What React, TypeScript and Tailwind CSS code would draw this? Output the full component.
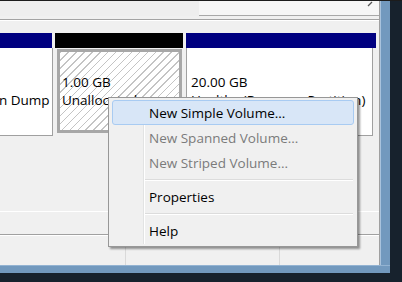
const hatch =
  "bg-[repeating-linear-gradient(135deg,#c4c4c4_0px,#c4c4c4_1px,#ffffff_1px,#ffffff_5.6px)]";

function MenuItem({ label, active, disabled }: { label: string; active?: boolean; disabled?: boolean }) {
  return (
    <div
      className={`relative flex h-[25px] items-center rounded-[3px] border pl-[36px] ${
        active ? "border-[#a8cbf2] bg-[#d8e6f7] text-black" : "border-transparent"
      } ${disabled ? "text-[#7b7b7b]" : "text-black"}`}
    >
      {label}
    </div>
  );
}

function Separator() {
  return (
    <div className="flex h-[9px] flex-col justify-center pl-[31px] pr-px">
      <div className="h-px bg-[#dcdcdc]" />
      <div className="h-px bg-white" />
    </div>
  );
}

export default function App() {
  return (
    <div className="relative h-[282px] w-[402px] overflow-hidden bg-[#17222d] font-['Open_Sans',sans-serif] text-[13.5px] leading-[18px] text-black">
      <div className="h-px w-full bg-[#1c1c1c]" />

      {/* window frame */}
      <div className="flex w-[390px] flex-col bg-[#7299be]">
        <div className="flex h-[264px]">
          <div className="flex w-[380px] flex-col border-r border-[#a0a0a0] bg-[#f0f0f0]">
            {/* top strip */}
            <div className="flex h-[15px]">
              <div className="flex-1 bg-[#eeeeee]" />
              <div className="relative w-[180px] border-b border-[#a8a8a8] bg-[#f6f6f6]">
                <svg className="absolute right-[6px] top-0" width="6" height="6" viewBox="0 0 6 6">
                  <path d="M1 5 L5 1" stroke="#555" strokeWidth="1.3" />
                </svg>
              </div>
            </div>
            <div className="h-[3px]" />
            <div className="h-px bg-[#a3a3a3]" />
            <div className="h-px bg-white" />
            <div className="h-[12px]" />

            {/* disk map */}
            <div className="flex h-[103px]">
              <div className="flex w-[53px] flex-col">
                <div className="mr-px h-[15px] bg-[#000080]" />
                <div className="flex-1 border-b border-r border-[#a0a0a0] bg-white pt-[25px] whitespace-nowrap">
                  <div className="h-[18px]" />
                  <div className="-ml-px">n Dump</div>
                </div>
              </div>
              <div className="w-[2px]" />
              <div className="flex w-[129px] flex-col">
                <div className="mr-px h-[15px] bg-black" />
                <div className="flex flex-1 flex-col pb-[3px] pl-[2px] pr-[2px] pt-px">
                  <div className={`flex-1 border-[3px] border-[#a7a7a7] pl-[2px] pt-[21px] ${hatch}`}>
                    <div>1.00 GB</div>
                    <div>Unallocated</div>
                  </div>
                </div>
              </div>
              <div className="w-[2px]" />
              <div className="flex w-[190px] flex-col">
                <div className="h-[15px] bg-[#000080]" />
                <div className="mr-[3px] flex-1 border border-t-0 border-[#a0a0a0] bg-white pl-[4px] pt-[25px] whitespace-nowrap">
                  <div>20.00 GB</div>
                  <div>Healthy (Recovery Partition)</div>
                </div>
              </div>
            </div>

            <div className="h-[75px]" />

            {/* lower panel */}
            <div className="h-[24px] border-b border-t border-b-[#a0a0a0] border-t-white" />
            <div className="h-px bg-white" />
            <div className="flex flex-1">
              <div className="w-[126px] border-r border-[#d9d9d9]" />
              <div className="w-[154px] border-r border-[#d9d9d9]" />
              <div className="flex-1" />
            </div>
          </div>
          <div className="w-[10px] border-l border-[#a9c3dd]" />
        </div>
        <div className="h-[8px] border-t border-[#93b3d2]" />
      </div>

      {/* context menu */}
      <div className="absolute left-[108px] top-[97px] h-[150px] w-[250px] border border-[#979797] bg-[#f0f0f0] px-[3px] pt-[2px] shadow-[2px_2px_2px_rgba(0,0,0,0.4)]">
        <div className="absolute bottom-[2px] left-[34px] top-[2px] w-px bg-[#e2e3e3]" />
        <div className="absolute bottom-[2px] left-[35px] top-[2px] w-px bg-white" />
        <MenuItem label="New Simple Volume..." active />
        <MenuItem label="New Spanned Volume..." disabled />
        <MenuItem label="New Striped Volume..." disabled />
        <Separator />
        <MenuItem label="Properties" />
        <Separator />
        <MenuItem label="Help" />
      </div>
    </div>
  );
}
